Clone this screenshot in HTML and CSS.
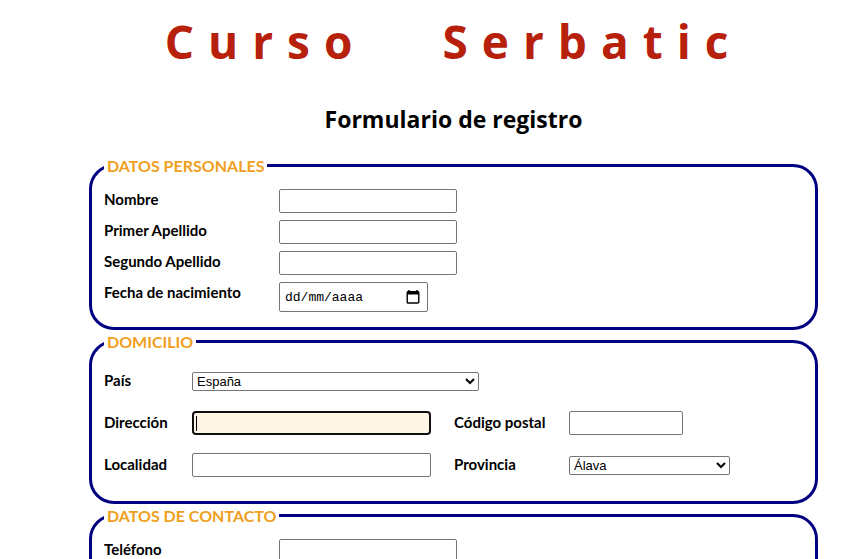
FILE: index.html
```html
<!DOCTYPE html>
<html lang="es">
<head>
  <meta charset="utf-8">
  <meta name="viewport" content="width=device-width, initial-scale=1">
  <title>Curso Serbatic</title>
  <link rel="stylesheet" href="styles.css">
</head>
<body>
  <main class="page">
    <h1 class="brand">Curso Serbatic</h1>
    <h2 class="title">Formulario de registro</h2>
    <form class="form">
      <fieldset class="group">
        <legend>DATOS PERSONALES</legend>
        <div class="rows">
          <label for="nombre">Nombre</label>
          <input class="field" id="nombre" type="text">
          <label for="apellido1">Primer Apellido</label>
          <input class="field" id="apellido1" type="text">
          <label for="apellido2">Segundo Apellido</label>
          <input class="field" id="apellido2" type="text">
          <label for="fecha">Fecha de nacimiento</label>
          <div class="date">
            <input class="date-text" id="fecha" type="text" placeholder="dd/mm/aaaa">
            <button class="date-button" type="button" aria-label="Abrir calendario">
              <svg width="14" height="14" viewBox="0 0 14 14" aria-hidden="true">
                <path d="M3 0v2M11 0v2" stroke="#000" stroke-width="1.5"/>
                <rect x="1.2" y="1.7" width="11.6" height="11.3" rx="1" fill="none" stroke="#000" stroke-width="1.4"/>
                <path d="M1 1.5h12v3H1z"/>
              </svg>
            </button>
          </div>
        </div>
      </fieldset>

      <fieldset class="group address">
        <legend>DOMICILIO</legend>
        <div class="address-rows">
          <label for="pais">País</label>
          <select class="select country" id="pais"><option>España</option></select>
          <label for="direccion">Dirección</label>
          <input class="field" id="direccion" type="text" autofocus>
          <label class="second" for="cp">Código postal</label>
          <input class="field postal" id="cp" type="text">
          <label for="localidad">Localidad</label>
          <input class="field" id="localidad" type="text">
          <label class="second" for="provincia">Provincia</label>
          <select class="select province" id="provincia"><option>Álava</option></select>
        </div>
      </fieldset>

      <fieldset class="group contact">
        <legend>DATOS DE CONTACTO</legend>
        <div class="rows">
          <label for="telefono">Teléfono</label>
          <input class="field" id="telefono" type="tel">
        </div>
      </fieldset>
    </form>
  </main>
</body>
</html>
```
FILE: styles.css
```css
* {
  box-sizing: border-box;
}

body {
  margin: 0;
  background: #fff;
  color: #000;
  font-family: "Open Sans", "Noto Sans", sans-serif;
}

.page {
  padding: 8px 35px 24px 89px;
}

.brand {
  margin: 0;
  color: #b7200b;
  font-size: 46px;
  font-weight: 700;
  line-height: 66px;
  letter-spacing: 14px;
  word-spacing: 50px;
  text-align: center;
  white-space: nowrap;
}

.title {
  margin: 28px 0 18px;
  font-size: 23px;
  font-weight: 700;
  line-height: 34px;
  text-align: center;
}

.group {
  min-width: 0;
  margin: 0;
  padding: 12px 12px 15px;
  border: 3px solid #000080;
  border-radius: 25px;
}

.group legend {
  padding: 0 3px;
  color: #f0a020;
  font-family: Lato, "Open Sans", sans-serif;
  font-size: 16px;
  font-weight: 700;
  line-height: 23px;
}

.rows {
  display: grid;
  grid-template-columns: 175px 178px;
  row-gap: 7px;
  align-items: start;
}

label {
  font-family: Lato, "Open Sans", sans-serif;
  font-size: 15px;
  font-weight: 700;
  line-height: 20px;
}

.field {
  width: 100%;
  height: 24px;
  margin: 0;
  padding: 1px 2px;
  border: 1px solid #767676;
  border-radius: 2px;
  background: #fff;
  font: 13px "Liberation Sans", sans-serif;
}

.field:focus {
  border: 2px solid #101010;
  border-radius: 4px;
  outline: none;
  background: #fff7e6 linear-gradient(#000, #000) 2px center / 1px 15px no-repeat;
  caret-color: transparent;
}

.date {
  display: flex;
  align-items: center;
  width: 149px;
  height: 30px;
  padding: 0 7px 0 5px;
  border: 1px solid #767676;
  border-radius: 2px;
}

.date-text {
  flex: 1;
  min-width: 0;
  padding: 0;
  border: 0;
  outline: 0;
  background: none;
  font: 13px "Liberation Mono", monospace;
}

.date-text::placeholder {
  color: #000;
  opacity: 1;
}

.date-button {
  display: flex;
  padding: 0;
  border: 0;
  background: none;
}

.address {
  padding: 16px 12px 24px;
}

.address label {
  line-height: 22px;
}

.address-rows {
  display: grid;
  grid-template-columns: 88px 239px 138px minmax(0, 1fr);
  grid-auto-rows: 24px;
  row-gap: 18px;
  align-items: start;
}

.second {
  padding-left: 23px;
}

.select {
  align-self: center;
  height: 19px;
  margin: 0;
  padding: 0;
  border: 1px solid #767676;
  border-radius: 2px;
  background: #fff;
  color: #000;
  font: 13px "Liberation Sans", sans-serif;
}

.country {
  grid-column: 2 / -1;
  width: 287px;
}

.province {
  width: 161px;
}

.postal {
  width: 114px;
}

.contact {
  padding-bottom: 60px;
}
```
